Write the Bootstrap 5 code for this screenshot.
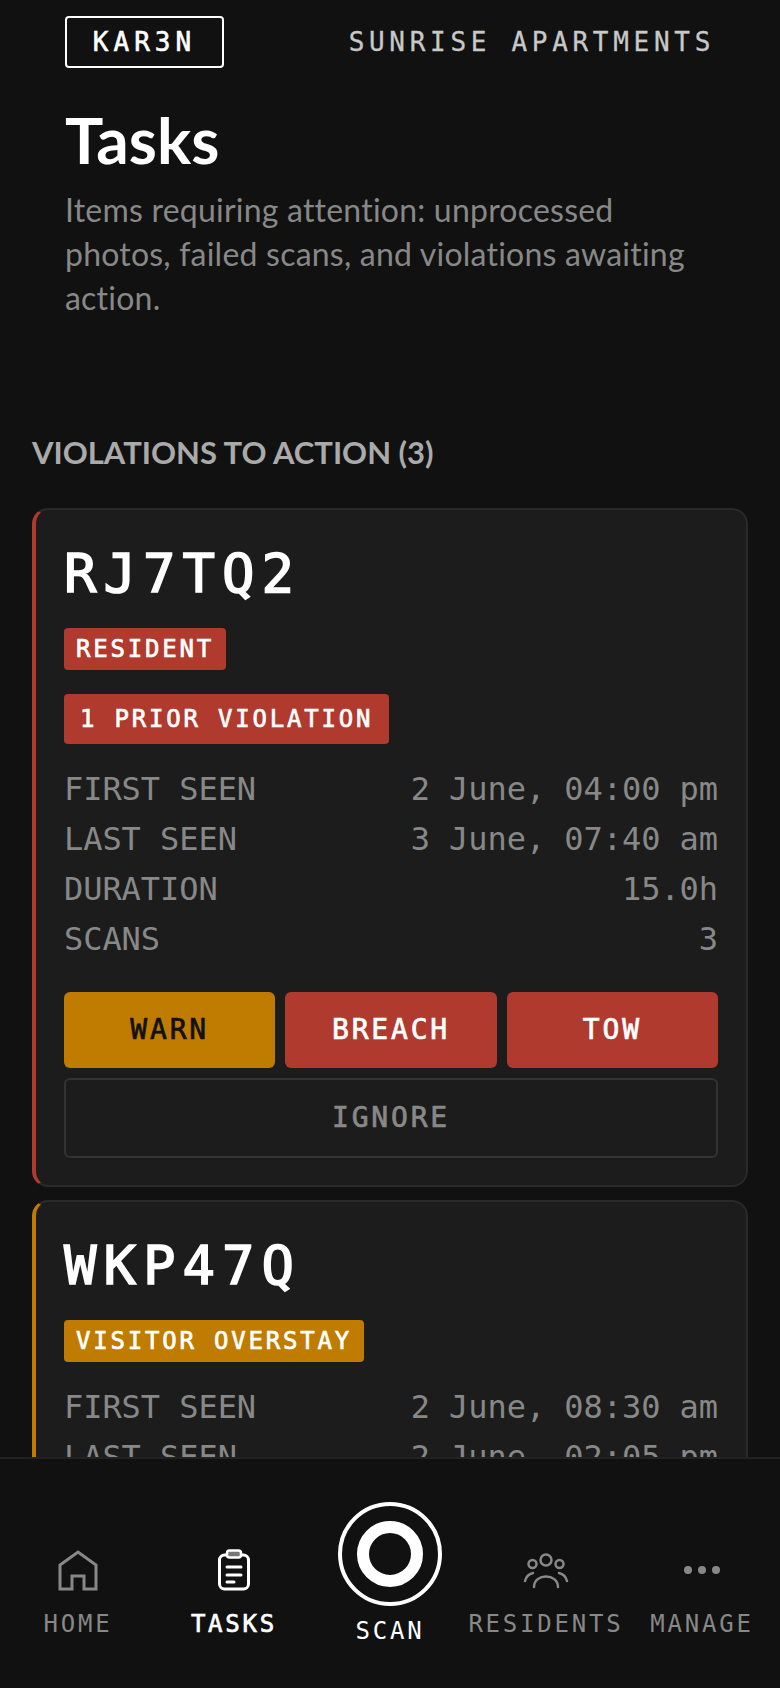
<!DOCTYPE html>
<html lang="en">
<head>
  <meta charset="UTF-8">
  <title>KAR3N Tasks</title>
  <meta name="viewport" content="width=device-width, initial-scale=1">
  <link href="https://cdn.jsdelivr.net/npm/bootstrap@5.3.0/dist/css/bootstrap.min.css" rel="stylesheet">
  <style>
    html, body { height: 100%; }
    body {
      margin: 0;
      background: #111;
      color: #fff;
      font-family: "Lato", sans-serif;
      overflow: hidden;
    }
    .mono { font-family: "DejaVu Sans Mono", "Liberation Mono", monospace; }

    .app-shell { height: 1688px; }
    .app-main { min-height: 0; overflow: hidden; }

    .top-bar { padding: 16px 65px 0; }
    .logo-box {
      width: 159px;
      height: 52px;
      border: 2px solid #fff;
      border-radius: 4px;
      font-size: 26px;
      letter-spacing: 5px;
      -webkit-text-stroke: .6px #fff;
    }
    .site-name {
      font-size: 26px;
      letter-spacing: 4.7px;
      color: #c8c8c8;
      -webkit-text-stroke: .3px #c8c8c8;
    }

    .page-head { padding: 36px 65px 0; }
    .page-title {
      font-size: 64px;
      line-height: 72px;
      font-weight: 700;
      margin: 0 0 12px;
    }
    .page-desc {
      font-size: 32px;
      line-height: 44px;
      letter-spacing: .22px;
      color: #888;
      margin: 0;
      max-width: 640px;
    }

    .sec-title {
      font-size: 31px;
      line-height: 36px;
      font-weight: 700;
      color: #aaa;
      margin: 114px 0 38px 32px;
    }

    .task-list { padding: 0 32px; }
    .task-card {
      background: #1c1c1c;
      border: 2px solid #2a2a2a;
      border-left: 4px solid #b03a2e;
      border-radius: 16px;
      padding: 30px 28px 27px 28px;
      margin-bottom: 13px;
    }
    .task-card.is-amber { border-left-color: #c07c00; }
    .plate-no {
      font-size: 54px;
      line-height: 68px;
      letter-spacing: 7px;
      margin-bottom: 20px;
      -webkit-text-stroke: 1.6px #fff;
    }
    .tag-pill {
      display: block;
      width: fit-content;
      border-radius: 4px;
      font-size: 24px;
      font-weight: 400;
      line-height: 42px;
      letter-spacing: 2.8px;
      padding: 0 12px;
      text-align: left;
      -webkit-text-stroke: .7px #fff;
    }
    .tag-red { background: #b03a2e; color: #fff; }
    .tag-amber { background: #c07c00; color: #fff; }
    .tag-big { line-height: 50px; padding: 0 16px; margin-top: 24px; }

    .fact-list { margin: 20px 0 0; }
    .fact-row {
      font-size: 32px;
      line-height: 50px;
      letter-spacing: -.06px;
      color: #888;
    }

    .act-row { margin-top: 28px; gap: 10px; }
    .act-btn {
      flex: 1 1 0;
      height: 76px;
      border: 0;
      border-radius: 6px;
      font-family: "DejaVu Sans Mono", "Liberation Mono", monospace;
      font-size: 28px;
      letter-spacing: 2.8px;
      padding: 0;
      -webkit-text-stroke: .7px currentColor;
    }
    .btn.act-warn, .btn.act-warn:hover { background: #c07c00; color: #111; }
    .btn.act-red, .btn.act-red:hover { background: #b03a2e; color: #fff; }
    .btn.act-ghost, .btn.act-ghost:hover {
      display: block;
      flex: none;
      width: 100%;
      height: 80px;
      margin-top: 10px;
      background: transparent;
      border: 2px solid #333;
      color: #888;
    }

    .tab-bar {
      flex: 0 0 231px;
      background: #111;
      border-top: 2px solid #222;
      display: grid;
      grid-template-columns: repeat(5, 1fr);
    }
    .tab-item {
      color: #888;
      font-size: 24px;
      line-height: 30px;
      letter-spacing: 2.8px;
      padding-bottom: 49px;
      text-decoration: none;
    }
    .tab-item.is-on { color: #fff; -webkit-text-stroke: .7px #fff; }
    .tab-icon { display: block; height: 42px; margin-bottom: 18px; }
    .tab-scan { color: #fff; padding-bottom: 42px; }
    .scan-ring {
      width: 104px;
      height: 104px;
      border: 4px solid #fff;
      border-radius: 50%;
      margin-bottom: 10px;
    }
    .scan-core {
      width: 66px;
      height: 66px;
      border: 12px solid #fff;
      border-radius: 50%;
    }
  </style>
</head>
<body>
  <div class="app-shell d-flex flex-column">
    <div class="app-main flex-grow-1">
      <header class="top-bar d-flex justify-content-between align-items-center">
        <div class="logo-box mono d-flex align-items-center justify-content-center">KAR3N</div>
        <div class="site-name mono">SUNRISE APARTMENTS</div>
      </header>

      <section class="page-head">
        <h1 class="page-title">Tasks</h1>
        <p class="page-desc">Items requiring attention: unprocessed photos, failed scans, and violations awaiting action.</p>
      </section>

      <h2 class="sec-title">VIOLATIONS TO ACTION (3)</h2>

      <div class="task-list">
        <div class="card task-card">
          <div class="plate-no mono">RJ7TQ2</div>
          <span class="badge tag-pill tag-red mono">RESIDENT</span>
          <span class="badge tag-pill tag-red tag-big mono">1 PRIOR VIOLATION</span>
          <div class="fact-list mono">
            <div class="fact-row d-flex justify-content-between"><span>FIRST SEEN</span><span>2 June, 04:00 pm</span></div>
            <div class="fact-row d-flex justify-content-between"><span>LAST SEEN</span><span>3 June, 07:40 am</span></div>
            <div class="fact-row d-flex justify-content-between"><span>DURATION</span><span>15.0h</span></div>
            <div class="fact-row d-flex justify-content-between"><span>SCANS</span><span>3</span></div>
          </div>
          <div class="act-row d-flex">
            <button class="btn act-btn act-warn" type="button">WARN</button>
            <button class="btn act-btn act-red" type="button">BREACH</button>
            <button class="btn act-btn act-red" type="button">TOW</button>
          </div>
          <button class="btn act-btn act-ghost" type="button">IGNORE</button>
        </div>

        <div class="card task-card is-amber">
          <div class="plate-no mono">WKP47Q</div>
          <span class="badge tag-pill tag-amber mono">VISITOR OVERSTAY</span>
          <div class="fact-list mono">
            <div class="fact-row d-flex justify-content-between"><span>FIRST SEEN</span><span>2 June, 08:30 am</span></div>
            <div class="fact-row d-flex justify-content-between"><span>LAST SEEN</span><span>2 June, 02:05 pm</span></div>
          </div>
        </div>
      </div>
    </div>

    <nav class="tab-bar mono">
      <a class="tab-item d-flex flex-column align-items-center justify-content-end" href="#">
        <svg class="tab-icon" width="40" height="42" viewBox="0 0 40 42" fill="none" stroke="#888" stroke-width="3">
          <path d="M2 40V16L20 3l18 13v24H26V27H14v13z"/>
        </svg>
        HOME
      </a>
      <a class="tab-item is-on d-flex flex-column align-items-center justify-content-end" href="#">
        <svg class="tab-icon" width="32" height="42" viewBox="0 0 32 42" fill="none" stroke="#fff" stroke-width="3" stroke-linecap="round">
          <rect x="1.500" y="6" width="29" height="34" rx="5"/>
          <rect x="9" y="1.500" width="14" height="7" rx="2.500" fill="#777" stroke-width="2.500"/>
          <path d="M9 18h14M9 26h14M9 33h7"/>
        </svg>
        TASKS
      </a>
      <a class="tab-item tab-scan d-flex flex-column align-items-center justify-content-end" href="#">
        <span class="scan-ring d-flex align-items-center justify-content-center"><span class="scan-core"></span></span>
        SCAN
      </a>
      <a class="tab-item d-flex flex-column align-items-center justify-content-end" href="#">
        <svg class="tab-icon" width="46" height="42" viewBox="0 0 46 42" fill="none" stroke="#888" stroke-width="2.500" stroke-linecap="round">
          <circle cx="23" cy="11" r="5.500"/>
          <circle cx="9.500" cy="15" r="4"/>
          <circle cx="36.500" cy="15" r="4"/>
          <path d="M11 38c0-14 24-14 24 0M2 32c1-4 4-7 8-8M44 32c-1-4-4-7-8-8"/>
        </svg>
        RESIDENTS
      </a>
      <a class="tab-item d-flex flex-column align-items-center justify-content-end" href="#">
        <svg class="tab-icon" width="38" height="42" viewBox="0 0 38 42" fill="#888">
          <circle cx="5" cy="21" r="4"/>
          <circle cx="19" cy="21" r="4"/>
          <circle cx="33" cy="21" r="4"/>
        </svg>
        MANAGE
      </a>
    </nav>
  </div>

  <script src="https://cdn.jsdelivr.net/npm/bootstrap@5.3.0/dist/js/bootstrap.bundle.min.js"></script>
</body>
</html>
